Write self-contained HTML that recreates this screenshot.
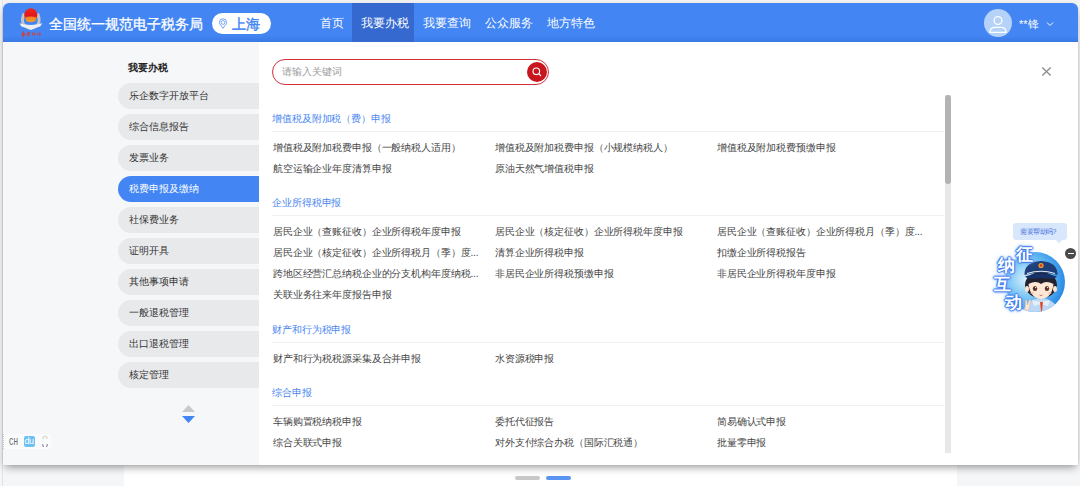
<!DOCTYPE html>
<html><head><meta charset="utf-8">
<style>
*{box-sizing:border-box;margin:0;padding:0}
html,body{width:1080px;height:486px;overflow:hidden;background:#f3f3f3;font-family:"Liberation Sans",sans-serif;}
.abs{position:absolute}
#bgL{left:0;top:0;width:124px;height:486px;background:#f5f6f8}
#bgC{left:124px;top:0;width:833px;height:486px;background:#fff}
#bgR{left:957px;top:0;width:123px;height:486px;background:#f5f6f8}
#topstrip{left:0;top:0;width:1080px;height:3px;background:#f3f3f3}
#card{left:3px;top:3px;width:1075px;height:462px;background:#fff;border-radius:6px 6px 0 0;box-shadow:0 4px 9px -2px rgba(0,0,0,.42),0 0 1px rgba(0,0,0,.08);overflow:hidden}
#hdr{left:0;top:0;width:1075px;height:39px;background:linear-gradient(#4285f3 0,#4285f3 33px,#3b79e3 39px)}
#side{left:0;top:39px;width:256px;height:423px;background:#f6f7f9}
#panel{left:256px;top:39px;width:819px;height:423px;background:#fff}
.t{white-space:nowrap;line-height:1}
.nav{color:#fff;font-size:12px}
.pill{left:115px;width:141px;height:26px;border-radius:13px 0 0 13px;background:#e8e9eb;color:#333;font-size:10px;line-height:26px;padding-left:11px;white-space:nowrap}
.pill.on{background:#4285f3;color:#fff}
.sec{color:#4a86f0;font-size:10px;letter-spacing:-.1px}
.hr{height:1px;background:#f1f1f1;left:272px;width:672px}
.it{color:#444;font-size:10px;letter-spacing:-.13px}
.glow{font-size:17px;font-weight:bold;color:#fff;text-shadow:1px 0 1px #3a78ee,-1px 0 1px #3a78ee,0 1px 1px #3a78ee,0 -1px 1px #3a78ee,0 0 3px #4a8cf4,0 0 5px #9cc2fa}
</style></head><body>
<div class="abs" id="bgL"></div>
<div class="abs" id="bgC"></div>
<div class="abs" id="bgR"></div>
<div class="abs" id="topstrip"></div>
<div class="abs" style="left:2px;top:0;width:1px;height:486px;background:#e4e4e4"></div>

<!-- dots -->
<div class="abs" style="left:515px;top:476px;width:25px;height:4px;border-radius:2px;background:#c8c8c8"></div>
<div class="abs" style="left:546px;top:476px;width:25px;height:4px;border-radius:2px;background:#5a95f2"></div>

<div class="abs" id="card">
  <div class="abs" id="hdr"></div>
  <div class="abs" id="side"></div>
  <div class="abs" id="panel"></div>
</div>

<!-- header content (page coords) -->
<svg class="abs" style="left:15px;top:4px" width="30" height="36" viewBox="0 0 30 36">
  <defs><linearGradient id="rg" x1="0" y1="0" x2="0" y2="1"><stop offset="0" stop-color="#ea2a22"/><stop offset=".55" stop-color="#e0141a"/><stop offset=".8" stop-color="#f07020"/><stop offset="1" stop-color="#f5a030"/></linearGradient></defs>
  <path d="M9.2 9.5 Q6 16 8.6 20.5 Q12 24 15.8 24 Q19.6 24 23 20.5 Q25.6 16 22.4 9.5" stroke="#c2c6cb" stroke-width="3" fill="none"/>
  <ellipse cx="15.8" cy="11.2" rx="6.5" ry="7" fill="url(#rg)"/>
  <path d="M10.4 13.6 Q15.8 11.6 21.2 13.6 L20.6 17 Q15.8 19 11 17Z" fill="#f29a2a" opacity=".75"/>
  <path d="M4.5 19.2 Q10 21 15.8 21 Q21.6 21 27.2 19.2 L25.2 22.6 Q20 24 15.8 26 Q11.6 24 6.4 22.6 Z" fill="#eceef0"/>
  <path d="M7.6 28.4 L8.9 28 M8.3 27.2 L8.3 34 M7 29.6 L9.7 29.6 L9.7 31.2 L7 31.2Z" stroke="#de3a2a" stroke-width=".9" fill="none"/>
  <path d="M12.5 28.6 L14.6 28.3 L14.4 31.6 L12.3 31.8Z M13 29.7 L14 30.7" stroke="#de3a2a" stroke-width=".9" fill="none"/>
  <path d="M17.4 28.6 L18 31.5 M19.2 28.4 L19.8 31.4 M18 29.8 L19.4 29.7" stroke="#de3a2a" stroke-width=".9" fill="none"/>
  <path d="M22.2 28.8 L23.2 31.5 M23.8 28.3 Q26 29 24.6 31.6 M24 30 L26 30.4" stroke="#de3a2a" stroke-width=".9" fill="none"/>
</svg>
<div class="abs t" style="left:49px;top:16.6px;color:#fff;font-size:14px;-webkit-text-stroke:.3px #fff">全国统一规范电子税务局</div>
<div class="abs" style="left:212px;top:13px;width:59px;height:21px;border-radius:11px;background:#fff"></div>
<svg class="abs" style="left:218px;top:18px" width="10" height="11" viewBox="0 0 10 11"><path d="M5 10.2 C2.6 7.2 1.4 5.8 1.4 4.4 A3.6 3.6 0 0 1 8.6 4.4 C8.6 5.8 7.4 7.2 5 10.2Z" fill="none" stroke="#5d95f4" stroke-width=".9"/><circle cx="5" cy="4.5" r="1.9" fill="none" stroke="#5d95f4" stroke-width=".8"/></svg>
<div class="abs t" style="left:232px;top:17px;color:#4285f3;font-size:14px;-webkit-text-stroke:.4px #4285f3">上海</div>

<div class="abs" style="left:352px;top:3px;width:62px;height:39px;background:#3569cf"></div>
<div class="abs t nav" style="left:320px;top:17px">首页</div>
<div class="abs t nav" style="left:361px;top:17px">我要办税</div>
<div class="abs t nav" style="left:423px;top:17px">我要查询</div>
<div class="abs t nav" style="left:485px;top:17px">公众服务</div>
<div class="abs t nav" style="left:547px;top:17px">地方特色</div>

<div class="abs" style="left:984px;top:9px;width:28px;height:28px;border-radius:50%;background:#b5d2f8"></div>
<svg class="abs" style="left:984px;top:9px" width="28" height="28" viewBox="0 0 28 28"><circle cx="14" cy="11.5" r="3.9" fill="none" stroke="#fff" stroke-width="1.3"/><path d="M6 23.3 Q6 18.3 11 18.3 L17 18.3 Q22 18.3 22 23.3 Z" fill="none" stroke="#fff" stroke-width="1.3"/></svg>
<div class="abs t" style="left:1019px;top:19px;color:#fff;font-size:11px">**锋</div>
<svg class="abs" style="left:1046px;top:21px" width="8" height="6" viewBox="0 0 8 6"><path d="M1 1.5 L4 4.5 L7 1.5" fill="none" stroke="#fff" stroke-width="1"/></svg>


<!-- sidebar -->
<div class="abs t" style="left:128px;top:63px;color:#222;font-size:10px;font-weight:bold">我要办税</div>
<div class="abs pill" style="top:83px;left:118px">乐企数字开放平台</div>
<div class="abs pill" style="top:114px;left:118px">综合信息报告</div>
<div class="abs pill" style="top:145px;left:118px">发票业务</div>
<div class="abs pill on" style="top:176px;left:118px">税费申报及缴纳</div>
<div class="abs pill" style="top:207px;left:118px">社保费业务</div>
<div class="abs pill" style="top:238px;left:118px">证明开具</div>
<div class="abs pill" style="top:269px;left:118px">其他事项申请</div>
<div class="abs pill" style="top:300px;left:118px">一般退税管理</div>
<div class="abs pill" style="top:331px;left:118px">出口退税管理</div>
<div class="abs pill" style="top:362px;left:118px">核定管理</div>
<svg class="abs" style="left:181px;top:404px" width="15" height="20" viewBox="0 0 15 20"><path d="M1 8 L7.5 1 L14 8Z" fill="#c8c8c8"/><path d="M1 12 L14 12 L7.5 19Z" fill="#4285f3"/></svg>

<!-- search -->
<div class="abs" style="left:272px;top:59px;width:277px;height:26px;border:1px solid #d2303a;border-radius:13px;background:#fff"></div>
<div class="abs t" style="left:282px;top:67px;color:#9c9c9c;font-size:10px">请输入关键词</div>
<div class="abs" style="left:527px;top:62px;width:20px;height:20px;border-radius:50%;background:#c8161e"></div>
<svg class="abs" style="left:527px;top:62px" width="20" height="20" viewBox="0 0 20 20"><circle cx="9.3" cy="9.3" r="3.3" fill="none" stroke="#fff" stroke-width="1.1"/><path d="M11.7 11.7 L14 14" stroke="#fff" stroke-width="1.1"/></svg>
<svg class="abs" style="left:1041px;top:66px" width="11" height="11" viewBox="0 0 11 11"><path d="M1.3 1.5 L9.7 9.5 M9.7 1.5 L1.3 9.5" stroke="#8a8a8a" stroke-width="1.25"/></svg>
<div class="abs t sec" style="left:272px;top:114px">增值税及附加税（费）申报</div>
<div class="abs hr" style="top:131px"></div>
<div class="abs t it" style="left:273px;top:143px">增值税及附加税费申报（一般纳税人适用）</div>
<div class="abs t it" style="left:495px;top:143px">增值税及附加税费申报（小规模纳税人）</div>
<div class="abs t it" style="left:717px;top:143px">增值税及附加税费预缴申报</div>
<div class="abs t it" style="left:273px;top:164px">航空运输企业年度清算申报</div>
<div class="abs t it" style="left:495px;top:164px">原油天然气增值税申报</div>
<div class="abs t sec" style="left:272px;top:198px">企业所得税申报</div>
<div class="abs hr" style="top:215px"></div>
<div class="abs t it" style="left:273px;top:227px">居民企业（查账征收）企业所得税年度申报</div>
<div class="abs t it" style="left:495px;top:227px">居民企业（核定征收）企业所得税年度申报</div>
<div class="abs t it" style="left:717px;top:227px">居民企业（查账征收）企业所得税月（季）度...</div>
<div class="abs t it" style="left:273px;top:248px">居民企业（核定征收）企业所得税月（季）度...</div>
<div class="abs t it" style="left:495px;top:248px">清算企业所得税申报</div>
<div class="abs t it" style="left:717px;top:248px">扣缴企业所得税报告</div>
<div class="abs t it" style="left:273px;top:269px">跨地区经营汇总纳税企业的分支机构年度纳税...</div>
<div class="abs t it" style="left:495px;top:269px">非居民企业所得税预缴申报</div>
<div class="abs t it" style="left:717px;top:269px">非居民企业所得税年度申报</div>
<div class="abs t it" style="left:273px;top:290px">关联业务往来年度报告申报</div>
<div class="abs t sec" style="left:272px;top:325px">财产和行为税申报</div>
<div class="abs hr" style="top:342px"></div>
<div class="abs t it" style="left:273px;top:354px">财产和行为税税源采集及合并申报</div>
<div class="abs t it" style="left:495px;top:354px">水资源税申报</div>
<div class="abs t sec" style="left:272px;top:388px">综合申报</div>
<div class="abs hr" style="top:405px"></div>
<div class="abs t it" style="left:273px;top:417px">车辆购置税纳税申报</div>
<div class="abs t it" style="left:495px;top:417px">委托代征报告</div>
<div class="abs t it" style="left:717px;top:417px">简易确认式申报</div>
<div class="abs t it" style="left:273px;top:438px">综合关联式申报</div>
<div class="abs t it" style="left:495px;top:438px">对外支付综合办税（国际汇税通）</div>
<div class="abs t it" style="left:717px;top:438px">批量零申报</div>
<div class="abs" style="left:945px;top:95px;width:6px;height:358px;background:#e8e8e8"></div>
<div class="abs" style="left:945px;top:95px;width:6px;height:89px;border-radius:3px;background:#b3b3b3"></div>

<!-- toolbar -->
<div class="abs" style="left:3px;top:434px;width:48px;height:15px;background:#fafbfc;border-left:1px dotted #ccc"></div>
<div class="abs t" style="left:9px;top:438px;color:#666;font-size:10px;font-family:'Liberation Mono',monospace;transform:scaleX(.75);transform-origin:left">CH</div>
<div class="abs" style="left:24px;top:436px;width:11px;height:11px;border-radius:2px;background:#6cc0f2"></div>
<div class="abs t" style="left:24.5px;top:436.5px;color:#fff;font-size:9px;letter-spacing:-.5px">du</div>
<svg class="abs" style="left:41px;top:435px" width="8" height="13" viewBox="0 0 8 13"><path d="M2.5 3.8 Q1.2 3 2.2 1.6 M5.5 3.8 Q6.8 3 5.8 1.6 M3 1.3 L5 1.3" stroke="#c9b8a8" stroke-width=".9" fill="none"/><path d="M1.8 9 L1.8 11.2 L3 11.4 M5 11.4 L6.2 11.2 L6.2 9" stroke="#8c7f90" stroke-width="1" fill="none"/></svg>

<!-- chat widget -->
<div class="abs" style="left:1013px;top:223px;width:54px;height:17px;border-radius:3px;background:#d9e7fc"></div>
<svg class="abs" style="left:1055px;top:239px" width="8" height="5" viewBox="0 0 8 5"><path d="M0 0 L8 0 L4 4.5Z" fill="#d9e7fc"/></svg>
<div class="abs t" style="left:1020px;top:228px;color:#3f6fdc;font-size:7px;letter-spacing:-.5px">需要帮助吗?</div>
<div class="abs" style="left:1065px;top:248px;width:11px;height:11px;border-radius:50%;background:#4a4a4a"></div>
<div class="abs" style="left:1067.5px;top:253px;width:6px;height:1.4px;background:#fff"></div>
<svg class="abs" style="left:990px;top:240px" width="80" height="76" viewBox="0 0 80 76">
  <defs>
    <radialGradient id="bc" cx="35%" cy="45%" r="65%"><stop offset="0" stop-color="#d6effc"/><stop offset=".55" stop-color="#6cc0f4"/><stop offset="1" stop-color="#2a8ae6"/></radialGradient>
    <clipPath id="cc"><circle cx="45" cy="42" r="30"/></clipPath>
  </defs>
  <circle cx="45" cy="42" r="30" fill="url(#bc)"/>
  <g clip-path="url(#cc)">
    <path d="M32 76 Q34 60 51 58 Q68 60 70 76Z" fill="#bcd8f4"/>
    <path d="M42 60 L51 62 L60 60 L58 66 L51 64 L44 66Z" fill="#e4eef8"/>
    <path d="M50 62 L51.5 76 L53 62Z" fill="#e34a2a"/>
  </g>
  <!-- hair & face -->
  <ellipse cx="51" cy="45" rx="16" ry="13" fill="#22222e"/>
  <ellipse cx="37" cy="49" rx="2" ry="3" fill="#fde3cf"/>
  <ellipse cx="65" cy="49" rx="2" ry="3" fill="#fde3cf"/>
  <path d="M38.5 44 Q40 58 51 59 Q62 58 63.5 44 Q56 40 51 44 Q46 40 38.5 44Z" fill="#fde6d6"/>
  <ellipse cx="45" cy="48.5" rx="2.2" ry="2.6" fill="#5a3024"/>
  <ellipse cx="57" cy="48.5" rx="2.2" ry="2.6" fill="#5a3024"/>
  <circle cx="45.6" cy="47.6" r=".7" fill="#fff"/><circle cx="57.6" cy="47.6" r=".7" fill="#fff"/>
  <ellipse cx="42" cy="53" rx="1.8" ry="1" fill="#f6b0a0" opacity=".7"/><ellipse cx="60" cy="53" rx="1.8" ry="1" fill="#f6b0a0" opacity=".7"/>
  <path d="M49.5 55 Q51 56.3 52.5 55" stroke="#b0504a" stroke-width=".7" fill="none"/>
  <!-- hat -->
  <path d="M34.5 35 Q34 22 51 21 Q68 22 67.5 35 Q51 30 34.5 35Z" fill="#1f3f7a"/>
  <path d="M35 36.5 Q51 30.5 67 36.5 Q64 40 51 38 Q38 40 35 36.5Z" fill="#173268"/>
  <path d="M37 33.5 Q51 29 65 33.5" stroke="#dfe8f4" stroke-width="1.1" fill="none"/>
  <circle cx="51" cy="25.5" r="2.6" fill="#e8a12a"/>
  <circle cx="51" cy="25.5" r="1.3" fill="#d8302a"/>
  <!-- hand -->
  <path d="M35 70 L35.5 60 L37 60.2 L37.3 65 L39.5 59.5 L41 60 L39.5 67 Q39 72 35 70Z" fill="#fde6d6" stroke="#c9a18a" stroke-width=".4"/>
</svg>
<div class="abs t glow" style="left:1016px;top:246px">征</div>
<div class="abs t glow" style="left:998px;top:257px">纳</div>
<div class="abs t glow" style="left:994px;top:276px">互</div>
<div class="abs t glow" style="left:1005px;top:294px">动</div>

</body></html>
